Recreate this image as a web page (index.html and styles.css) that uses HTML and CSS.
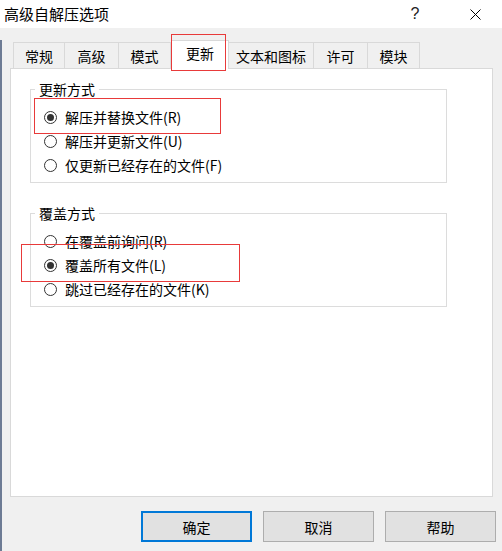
FILE: index.html
```html
<!DOCTYPE html>
<html lang="zh-CN">
<head>
<meta charset="utf-8">
<title>高级自解压选项</title>
<link rel="stylesheet" href="styles.css">
</head>
<body>
<div class="window">
  <div class="titlebar">
    <span class="title">高级自解压选项</span>
    <span class="title-btn help">?</span>
    <span class="title-btn close">
      <svg width="11" height="11" viewBox="0 0 11 11"><path d="M0.5 0.5L10.5 10.5M10.5 0.5L0.5 10.5" stroke="#000" stroke-width="1" fill="none"/></svg>
    </span>
  </div>
  <div class="content">
    <div class="tabs">
      <div class="tab tab-first w52">常规</div>
      <div class="tab w54">高级</div>
      <div class="tab w52">模式</div>
      <div class="tab tab-active">更新</div>
      <div class="tab w85">文本和图标</div>
      <div class="tab w54">许可</div>
      <div class="tab w52">模块</div>
    </div>
    <div class="panel">
      <div class="group">
        <span class="legend">更新方式</span>
        <label class="option"><span class="radio checked"></span>解压并替换文件(R)</label>
        <label class="option"><span class="radio"></span>解压并更新文件(U)</label>
        <label class="option"><span class="radio"></span>仅更新已经存在的文件(F)</label>
      </div>
      <div class="group group-second">
        <span class="legend">覆盖方式</span>
        <label class="option"><span class="radio"></span>在覆盖前询问(R)</label>
        <label class="option"><span class="radio checked"></span>覆盖所有文件(L)</label>
        <label class="option"><span class="radio"></span>跳过已经存在的文件(K)</label>
      </div>
    </div>
    <div class="buttons">
      <button class="btn btn-default">确定</button>
      <button class="btn">取消</button>
      <button class="btn">帮助</button>
    </div>
  </div>
  <div class="mark mark-tab"></div>
  <div class="mark mark-one"></div>
  <div class="mark mark-two"></div>
</div>
</body>
</html>
```

FILE: styles.css
```css
html, body {
  margin: 0;
  padding: 0;
  background: #f0f0f0;
}

.window {
  position: relative;
  width: 502px;
  height: 551px;
  overflow: hidden;
  font-family: "Noto Sans CJK SC", "Noto Sans", sans-serif;
  color: #000;
}

.titlebar {
  height: 28px;
  background: #fff;
  display: flex;
  align-items: center;
  padding: 0 12px 0 4px;
  box-sizing: border-box;
}

.title {
  font-size: 15px;
  line-height: 20px;
}

.title-btn {
  width: 30px;
  height: 28px;
  display: flex;
  align-items: center;
  justify-content: center;
}

.help {
  margin-left: auto;
  margin-right: 30px;
  font-family: "Liberation Sans", sans-serif;
  font-size: 16px;
  color: #222;
}

.content {
  height: 523px;
  background: #f0f0f0;
  border-left: 2px solid #6d7b94;
  box-sizing: border-box;
}

.tabs {
  display: flex;
  align-items: flex-end;
  height: 28px;
  margin: 12px 0 0 11px;
}

.tab {
  height: 26px;
  box-sizing: border-box;
  border-top: 1px solid #d9d9d9;
  border-right: 1px solid #d9d9d9;
  background: #f0f0f0;
  display: flex;
  align-items: center;
  justify-content: center;
  font-size: 14px;
  line-height: 18px;
}

.tab-first { border-left: 1px solid #d9d9d9; }
.w52 { width: 52px; }
.w54 { width: 54px; }
.w85 { width: 85px; }

.tab-active {
  width: 58px;
  height: 29px;
  margin-bottom: -1px;
  background: #fff;
  border-left: 1px solid #d9d9d9;
  position: relative;
  z-index: 1;
  padding-bottom: 4px;
}

.panel {
  margin-left: 8px;
  width: 483px;
  height: 429px;
  box-sizing: border-box;
  border: 1px solid #d9d9d9;
  background: #fff;
  padding: 20px 0 0 19px;
}

.group {
  position: relative;
  width: 417px;
  height: 94px;
  box-sizing: border-box;
  border: 1px solid #dcdcdc;
  padding: 15px 0 0 13px;
}

.group-second { margin-top: 30px; }

.legend {
  position: absolute;
  top: -11px;
  left: 4px;
  padding: 0 4px;
  background: #fff;
  font-size: 14px;
  line-height: 20px;
}

.option {
  display: flex;
  align-items: center;
  height: 24px;
  font-size: 14px;
}

.radio {
  width: 13px;
  height: 13px;
  box-sizing: border-box;
  border: 1px solid #333;
  border-radius: 50%;
  background: #fff;
  margin-right: 8px;
  display: flex;
  align-items: center;
  justify-content: center;
}

.radio.checked::after {
  content: "";
  width: 7px;
  height: 7px;
  border-radius: 50%;
  background: #333;
}

.buttons {
  display: flex;
  justify-content: flex-end;
  gap: 11px;
  margin-top: 14px;
  padding-right: 6px;
}

.btn {
  width: 111px;
  height: 31px;
  box-sizing: border-box;
  background: #e1e1e1;
  border: 1px solid #adadad;
  font-family: "Noto Sans CJK SC", "Noto Sans", sans-serif;
  font-size: 14px;
  color: #000;
  padding: 0;
}

.btn-default { border: 2px solid #0078d7; }

.mark {
  position: absolute;
  border: 1px solid #e83a3a;
  box-sizing: border-box;
  pointer-events: none;
}

.mark-tab { left: 171px; top: 34px; width: 55px; height: 37px; z-index: 2; }
.mark-one { left: 34px; top: 98px; width: 187px; height: 36px; }
.mark-two { left: 21px; top: 244px; width: 219px; height: 38px; }
```
